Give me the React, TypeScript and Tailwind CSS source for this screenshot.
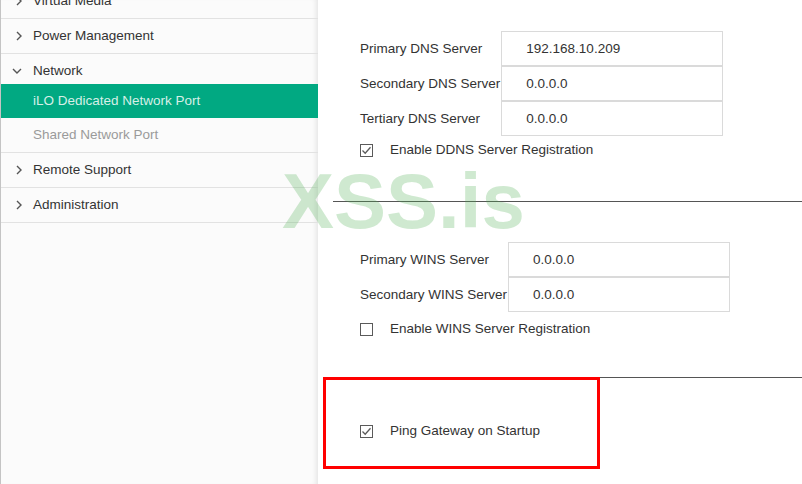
import React from "react";

const navRows = [
  { label: "Virtual Media", kind: "closed" },
  { label: "Power Management", kind: "closed" },
  { label: "Network", kind: "open" },
  { label: "iLO Dedicated Network Port", kind: "active" },
  { label: "Shared Network Port", kind: "sub" },
  { label: "Remote Support", kind: "closed" },
  { label: "Administration", kind: "closed" },
];

function ChevronRight() {
  return (
    <svg width="6" height="10" viewBox="0 0 6 10" className="shrink-0">
      <polyline points="1,1 5,5 1,9" fill="none" stroke="#555" strokeWidth="1.4" />
    </svg>
  );
}

function ChevronDown() {
  return (
    <svg width="10" height="6" viewBox="0 0 10 6" className="shrink-0">
      <polyline points="1,1 5,5 9,1" fill="none" stroke="#555" strokeWidth="1.4" />
    </svg>
  );
}

function Checkbox({ checked }: { checked: boolean }) {
  return (
    <svg width="13" height="13" viewBox="0 0 13 13" className="shrink-0">
      <rect x="0.5" y="0.5" width="12" height="12" fill="#fff" stroke="#5a5a5a" strokeWidth="1" />
      {checked && (
        <polyline points="2.5,6.5 5.2,9.2 10.5,3.2" fill="none" stroke="#5a5a5a" strokeWidth="1.3" />
      )}
    </svg>
  );
}

function NavRow({ label, kind }: { label: string; kind: string }) {
  if (kind === "active") {
    return (
      <div className="h-[34px] flex items-center pl-[32px] bg-[#01a982] text-[#d6efe7]">
        {label}
      </div>
    );
  }
  if (kind === "sub") {
    return (
      <div className="h-[35px] flex items-center pl-[32px] border-b border-[#e2e2e2] text-[#9a9a9a]">
        {label}
      </div>
    );
  }
  if (kind === "open") {
    return (
      <div className="h-[30px] flex items-center pt-[4px] text-[#333]">
        <div className="w-[32px] pl-[11px] flex items-center">
          <ChevronDown />
        </div>
        {label}
      </div>
    );
  }
  return (
    <div className="h-[35px] flex items-center border-b border-[#e2e2e2] text-[#333]">
      <div className="w-[32px] pl-[15px] flex items-center">
        <ChevronRight />
      </div>
      {label}
    </div>
  );
}

function ServerFields({ rows }: { rows: { label: string; value: string }[] }) {
  return (
    <div className="grid grid-cols-[auto_222px] gap-x-[1px]">
      {rows.map((r) => (
        <React.Fragment key={r.label}>
          <div className="h-[35px] flex items-center pt-px whitespace-nowrap text-[#333]">{r.label}</div>
          <div className="h-[35px] flex items-center pt-px pl-[24px] border border-[#dadada] text-[#333]">
            {r.value}
          </div>
        </React.Fragment>
      ))}
    </div>
  );
}

function CheckRow({ checked, label, className }: { checked: boolean; label: string; className: string }) {
  return (
    <div className={`h-[20px] flex items-center gap-[17px] text-[#333] ${className}`}>
      <Checkbox checked={checked} />
      <span>{label}</span>
    </div>
  );
}

export default function App() {
  return (
    <div className="relative w-[802px] h-[484px] overflow-hidden bg-white flex font-['Liberation_Sans',Arial,sans-serif] text-[13.5px]">
      {/* Sidebar */}
      <div className="w-[318px] h-full shrink-0 border-l border-[#c4c4c4] bg-[#fbfbfb] shadow-[inset_-5px_0_5px_-3px_rgba(0,0,0,0.09)]">
        <div className="-mt-[16px] text-[13.5px]">
          {navRows.map((r) => (
            <NavRow key={r.label} label={r.label} kind={r.kind} />
          ))}
        </div>
      </div>

      {/* Content */}
      <div className="relative flex-1 h-full">
        <div className="pl-[42px] pt-[31px]">
          <div className="w-fit">
            <ServerFields
              rows={[
                { label: "Primary DNS Server", value: "192.168.10.209" },
                { label: "Secondary DNS Server", value: "0.0.0.0" },
                { label: "Tertiary DNS Server", value: "0.0.0.0" },
              ]}
            />
          </div>
          <CheckRow checked label="Enable DDNS Server Registration" className="mt-[4px]" />
        </div>

        <div className="ml-[15px] mt-[41px] h-px bg-[#555]" />

        <div className="pl-[42px] mt-[40px]">
          <div className="w-fit">
            <ServerFields
              rows={[
                { label: "Primary WINS Server", value: "0.0.0.0" },
                { label: "Secondary WINS Server", value: "0.0.0.0" },
              ]}
            />
          </div>
          <CheckRow checked={false} label="Enable WINS Server Registration" className="mt-[7px]" />
        </div>

        <div className="ml-[15px] mt-[38px] h-px bg-[#555]" />

        <div className="pl-[42px] mt-[43px]">
          <CheckRow checked label="Ping Gateway on Startup" className="" />
        </div>

        {/* annotation box */}
        <div className="absolute left-[5px] top-[377px] w-[277px] h-[92px] border-[3px] border-[#ff0000]" />
      </div>

      {/* watermark */}
      <div className="absolute left-[282px] top-[162px] text-[78px] font-bold leading-none text-[rgba(76,175,80,0.27)] pointer-events-none select-none">
        XSS.is
      </div>
    </div>
  );
}
